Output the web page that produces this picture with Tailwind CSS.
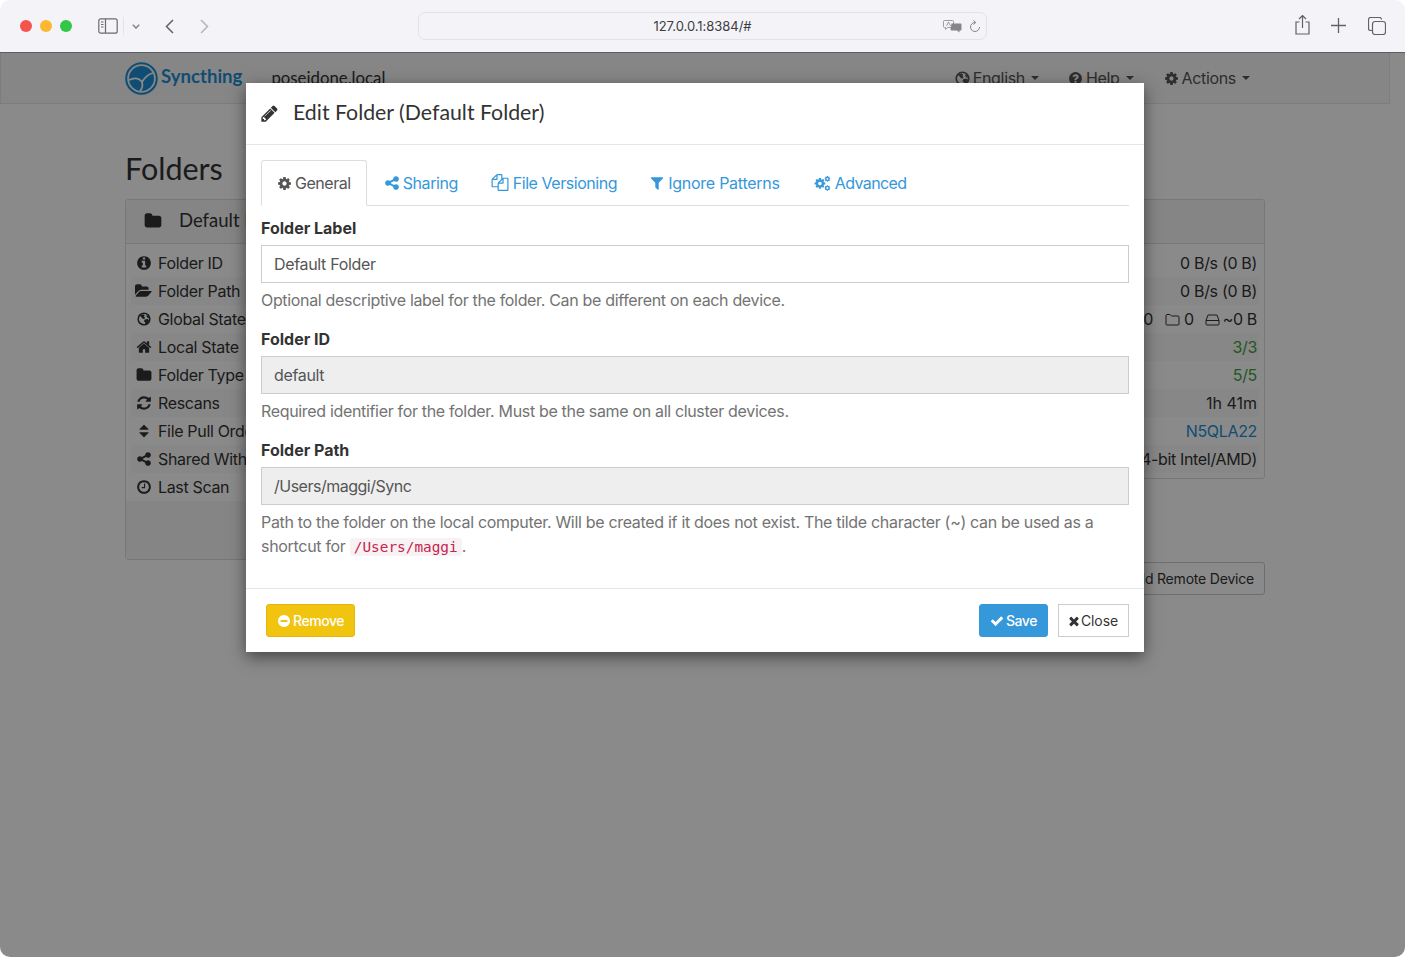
<!DOCTYPE html>
<html lang="en">
<head>
<meta charset="UTF-8">
<title>Syncthing</title>
<script src="https://cdn.jsdelivr.net/npm/@tailwindcss/browser@4"></script>
</head>
<body class="bg-white font-['Inter',sans-serif] text-[16px] tracking-[-0.33px] text-[#333]">
<!-- icon set -->
<svg class="hidden">
  <symbol id="cog" viewBox="0 0 1792 1792"><path fill="currentColor" d="M1152 896q0-106-75-181t-181-75-181 75-75 181 75 181 181 75 181-75 75-181zm512-109v222q0 12-8 23t-20 13l-185 28q-19 54-39 91 35 50 107 138 10 12 10 25t-9 23q-27 37-99 108t-94 71q-12 0-26-9l-138-108q-44 23-91 38-16 136-29 186-7 28-36 28h-222q-14 0-24.500-8.500t-11.500-21.500l-28-184q-49-16-90-37l-141 107q-10 9-25 9-14 0-25-11-126-114-165-168-7-10-7-23 0-12 8-23 15-21 51-66.500t54-70.500q-27-50-41-99l-183-27q-13-2-21-12.500t-8-23.500v-222q0-12 8-23t19-13l186-28q14-46 39-92-40-57-107-138-10-12-10-24 0-10 9-23 26-36 98.500-107.500t94.500-71.500q13 0 26 10l138 107q44-23 91-38 16-136 29-186 7-28 36-28h222q14 0 24.500 8.500t11.500 21.500l28 184q49 16 90 37l142-107q9-9 24-9 13 0 25 10 129 119 165 170 7 8 7 22 0 12-8 23-15 21-51 66.500t-54 70.500q26 50 41 98l183 28q13 2 21 12.500t8 23.500z"/></symbol>
  <symbol id="pencil" viewBox="0 0 1792 1792"><path fill="currentColor" d="M491 1536l91-91-235-235-91 91v107h128v128h107zm523-928q0-22-22-22-10 0-17 7l-542 542q-7 7-7 17 0 22 22 22 10 0 17-7l542-542q7-7 7-17zm-54-192l416 416-832 832h-416v-416zm683 96q0 53-37 90l-166 166-416-416 166-165q36-38 90-38 53 0 91 38l235 234q37 39 37 91z"/></symbol>
  <symbol id="share" viewBox="0 0 1792 1792"><path fill="currentColor" d="M1344 1024q133 0 226.500 93.500t93.500 226.500-93.500 226.500-226.500 93.500-226.500-93.500-93.500-226.500q0-12 2-34l-360-180q-92 86-218 86-133 0-226.500-93.500t-93.500-226.500 93.500-226.500 226.500-93.500q126 0 218 86l360-180q-2-22-2-34 0-133 93.500-226.500t226.500-93.500 226.500 93.500 93.500 226.500-93.500 226.500-226.500 93.500q-126 0-218-86l-360 180q2 22 2 34t-2 34l360 180q92-86 218-86z"/></symbol>
  <symbol id="files" viewBox="0 0 1792 1792"><path fill="currentColor" d="M1696 384q40 0 68 28t28 68v1216q0 40-28 68t-68 28h-960q-40 0-68-28t-28-68v-288h-544q-40 0-68-28t-28-68v-672q0-40 20-88t48-76l408-408q28-28 76-48t88-20h416q40 0 68 28t28 68v328q68-40 128-40h416zm-544 213l-299 299h299v-299zm-640-384l-299 299h299v-299zm196 647l316-316v-416h-384v416q0 40-28 68t-68 28h-416v640h512v-256q0-40 20-88t48-76zm956 804v-1152h-384v416q0 40-28 68t-68 28h-416v640h896z"/></symbol>
  <symbol id="filter" viewBox="0 0 1792 1792"><path fill="currentColor" d="M1595 295q17 41-14 70l-493 493v742q0 42-39 59-13 5-25 5-27 0-45-19l-256-256q-19-19-19-45v-486l-493-493q-31-29-14-70 17-39 59-39h1280q42 0 59 39z"/></symbol>
  <symbol id="folder" viewBox="0 0 1792 1792"><path fill="currentColor" d="M1728 608v704q0 92-66 158t-158 66h-1216q-92 0-158-66t-66-158v-960q0-92 66-158t158-66h320q92 0 158 66t66 158v32h672q92 0 158 66t66 158z"/></symbol>
  <symbol id="folder-open" viewBox="0 0 1920 1792"><path fill="currentColor" d="M1879 952q0 31-31 66l-336 396q-43 51-120.500 86.500t-143.500 35.500h-1088q-34 0-60.500-13t-26.500-43q0-31 31-66l336-396q43-51 120.500-86.500t143.500-35.500h1088q34 0 60.500 13t26.500 43zm-343-344v160h-832q-94 0-197 47.500t-164 119.500l-337 396-5 6q0-4-.5-12.500t-.5-12.500v-960q0-92 66-158t158-66h320q92 0 158 66t66 158v32h544q92 0 158 66t66 158z"/></symbol>
  <symbol id="info" viewBox="0 0 1792 1792"><path fill="currentColor" d="M1152 1376v-160q0-14-9-23t-23-9h-96v-512q0-14-9-23t-23-9h-320q-14 0-23 9t-9 23v160q0 14 9 23t23 9h96v320h-96q-14 0-23 9t-9 23v160q0 14 9 23t23 9h448q14 0 23-9t9-23zm-128-896v-160q0-14-9-23t-23-9h-192q-14 0-23 9t-9 23v160q0 14 9 23t23 9h192q14 0 23-9t9-23zm640 416q0 209-103 385.500t-279.500 279.500-385.500 103-385.500-103-279.500-279.500-103-385.500 103-385.500 279.500-279.500 385.500-103 385.500 103 279.500 279.500 103 385.500z"/></symbol>
  <symbol id="home" viewBox="0 0 1792 1792"><path fill="currentColor" d="M1472 992v480q0 26-19 45t-45 19h-384v-384h-256v384h-384q-26 0-45-19t-19-45v-480q0-1 .5-3t.5-3l575-474 575 474q1 2 1 6zm223-69l-62 74q-8 9-21 11h-3q-13 0-21-7l-692-577-692 577q-12 8-24 7-13-2-21-11l-62-74q-8-10-7-23.500t11-21.500l719-599q32-26 76-26t76 26l244 204v-195q0-14 9-23t23-9h192q14 0 23 9t9 23v408l219 182q10 8 11 21.500t-7 23.500z"/></symbol>
  <symbol id="refresh" viewBox="0 0 1792 1792"><path fill="currentColor" d="M1639 1056q0 5-1 7-64 268-268 434.500t-478 166.500q-146 0-282.500-55t-243.500-157l-129 129q-19 19-45 19t-45-19-19-45v-448q0-26 19-45t45-19h448q26 0 45 19t19 45-19 45l-137 137q71 66 161 102t187 36q134 0 250-65t186-179q11-17 53-117 8-23 30-23h192q13 0 22.500 9.500t9.500 22.500zm25-800v448q0 26-19 45t-45 19h-448q-26 0-45-19t-19-45 19-45l138-138q-148-137-349-137-134 0-250 65t-186 179q-11 17-53 117-8 23-30 23h-199q-13 0-22.500-9.500t-9.500-22.500v-7q65-268 270-434.500t480-166.500q146 0 284 55.500t245 156.500l130-129q19-19 45-19t45 19 19 45z"/></symbol>
  <symbol id="sort" viewBox="0 0 1792 1792"><path fill="currentColor" d="M1408 1088q0 26-19 45l-448 448q-19 19-45 19t-45-19l-448-448q-19-19-19-45t19-45 45-19h896q26 0 45 19t19 45zm0-384q0 26-19 45t-45 19h-896q-26 0-45-19t-19-45 19-45l448-448q19-19 45-19t45 19l448 448q19 19 19 45z"/></symbol>
  <symbol id="clock" viewBox="0 0 1792 1792"><path fill="currentColor" d="M1024 544v448q0 14-9 23t-23 9h-320q-14 0-23-9t-9-23v-64q0-14 9-23t23-9h224v-352q0-14 9-23t23-9h64q14 0 23 9t9 23zm416 352q0-148-73-273t-198-198-273-73-273 73-198 198-73 273 73 273 198 198 273 73 273-73 198-198 73-273zm224 0q0 209-103 385.500t-279.500 279.500-385.500 103-385.500-103-279.500-279.500-103-385.500 103-385.500 279.500-279.500 385.500-103 385.500 103 279.500 279.500 103 385.500z"/></symbol>
  <symbol id="question" viewBox="0 0 1792 1792"><path fill="currentColor" d="M1024 1376v-192q0-14-9-23t-23-9h-192q-14 0-23 9t-9 23v192q0 14 9 23t23 9h192q14 0 23-9t9-23zm256-672q0-88-55.500-163t-138.500-116-170-41q-243 0-371 213-15 24 8 42l132 100q7 6 19 6 16 0 25-12 53-68 86-92 34-24 86-24 48 0 85.500 26t37.500 59q0 38-20 61t-68 45q-63 28-115.500 86.500t-52.500 125.500v36q0 14 9 23t23 9h192q14 0 23-9t9-23q0-19 21.500-49.500t54.500-49.500q32-18 49-28.500t46-35 44.500-48 28-60.500 12.500-81zm384 192q0 209-103 385.500t-279.500 279.500-385.500 103-385.500-103-279.500-279.500-103-385.500 103-385.500 279.500-279.500 385.500-103 385.500 103 279.500 279.500 103 385.500z"/></symbol>
  <symbol id="minus" viewBox="0 0 1792 1792"><path fill="currentColor" d="M1344 960v-128q0-26-19-45t-45-19h-768q-26 0-45 19t-19 45v128q0 26 19 45t45 19h768q26 0 45-19t19-45zm320-64q0 209-103 385.500t-279.500 279.500-385.500 103-385.500-103-279.500-279.500-103-385.500 103-385.500 279.500-279.500 385.500-103 385.500 103 279.500 279.500 103 385.500z"/></symbol>
  <symbol id="check" viewBox="0 0 1792 1792"><path fill="currentColor" d="M1671 566q0 40-28 68l-724 724-136 136q-28 28-68 28t-68-28l-136-136-362-362q-28-28-28-68t28-68l136-136q28-28 68-28t68 28l294 295 656-657q28-28 68-28t68 28l136 136q28 28 28 68z"/></symbol>
  <symbol id="times" viewBox="0 0 1792 1792"><path fill="currentColor" d="M1490 1322q0 40-28 68l-136 136q-28 28-68 28t-68-28l-294-294-294 294q-28 28-68 28t-68-28l-136-136q-28-28-28-68t28-68l294-294-294-294q-28-28-28-68t28-68l136-136q28-28 68-28t68 28l294 294 294-294q28-28 68-28t68 28l136 136q28 28 28 68t-28 68l-294 294 294 294q28 28 28 68z"/></symbol>
  <symbol id="globe" viewBox="0 0 24 24"><circle cx="12" cy="12" r="10" fill="none" stroke="currentColor" stroke-width="2.600"/><path fill="currentColor" d="M5 6l5-2 3 1-1 3 2 2-2 2-3-1-2-3-2-1zM13 13l5-1 3 2-3 6-3 2-1-4-2-2zM17 5l3 3 1 3-3-1-2-3z"/></symbol>
  <symbol id="cogs" viewBox="0 0 24 24"><use href="#cog" x="2" y="5" width="15" height="15"/><use href="#cog" x="14.500" y="3" width="8" height="8"/><use href="#cog" x="14.500" y="14" width="8" height="8"/></symbol>
</svg>

<div class="relative h-[957px] overflow-hidden rounded-[10px] flex flex-col">
  <!-- browser toolbar -->
  <div class="h-[53px] shrink-0 bg-[#f3f3f8] border-b border-[#5e5e5e] flex items-center pl-[20px] pr-[19px] relative z-20">
    <div class="flex gap-[8px]">
      <span class="w-3 h-3 rounded-full bg-[#f4544c]"></span>
      <span class="w-3 h-3 rounded-full bg-[#fcb82e]"></span>
      <span class="w-3 h-3 rounded-full bg-[#33c748]"></span>
    </div>
    <svg class="ml-[26px] w-[20px] h-[16px] text-[#6b6b6f]" viewBox="0 0 20 16" fill="none" stroke="currentColor" stroke-width="1.200"><rect x=".8" y=".8" width="18.400" height="14.400" rx="2"/><path d="M7.500 1v14"/><path d="M3 4h2.500M3 6.500h2.500M3 9h2.500" stroke-width="1"/></svg>
    <span class="ml-[5px] w-px h-[18px] bg-[#e3e3e8]"></span>
    <svg class="ml-[8px] w-[8px] h-[5px] text-[#7c7c80]" viewBox="0 0 8 5" fill="none" stroke="currentColor" stroke-width="1.300"><path d="M.8.8L4 4l3.200-3.200"/></svg>
    <svg class="ml-[25px] w-[9px] h-[15px] text-[#626266]" viewBox="0 0 9 15" fill="none" stroke="currentColor" stroke-width="1.500"><path d="M8 1L1.500 7.500 8 14"/></svg>
    <svg class="ml-[26px] w-[9px] h-[15px] text-[#b6b6ba]" viewBox="0 0 9 15" fill="none" stroke="currentColor" stroke-width="1.500"><path d="M1 1l6.500 6.500L1 14"/></svg>
    <div class="ml-[209px] w-[569px] h-[28px] pt-[1px] rounded-[7px] border border-[#e2e2e7] bg-[#f3f3f8] relative flex items-center justify-center text-[13px] tracking-[-0.03px] text-[#3d3d3f]">
      127.0.0.1:8384/#
      <svg class="absolute right-[24px] top-[7px] w-[19px] h-[13px] text-[#85858a]" viewBox="0 0 19 13"><path d="M1.500.500h8a1 1 0 0 1 1 1v5a1 1 0 0 1-1 1h-5L2.500 9.500v-2h-1a1 1 0 0 1-1-1v-5a1 1 0 0 1 1-1z" fill="none" stroke="currentColor" stroke-width=".8"/><path d="M8.500 3.500h9a1 1 0 0 1 1 1v5a1 1 0 0 1-1 1h-1v2l-2.500-2h-5.500a1 1 0 0 1-1-1z" fill="currentColor"/><path d="M3.500 6l2-4 2 4" fill="none" stroke="currentColor" stroke-width=".8"/></svg>
      <svg class="absolute right-[5px] top-[7px] w-[12px] h-[13px] text-[#85858a]" viewBox="0 0 12 13" fill="none" stroke="currentColor" stroke-width="1"><path d="M6 2.500a4.500 4.500 0 1 0 4.500 4.500"/><path d="M4.500.500L6.800 2.500 4.500 4.500"/></svg>
    </div>
    <div class="ml-auto flex items-center text-[#626266]">
      <svg class="w-[15px] h-[20px] -mt-[2px]" viewBox="0 0 15 20" fill="none" stroke="currentColor" stroke-width="1.200"><path d="M4.500 7H1v12h13V7h-3.500"/><path d="M7.500 13V1M4 4l3.500-3.500L11 4"/></svg>
      <svg class="ml-[21px] w-[15px] h-[15px] -mt-[1px]" viewBox="0 0 15 15" fill="none" stroke="currentColor" stroke-width="1.300"><path d="M7.500 0v15M0 7.500h15"/></svg>
      <svg class="ml-[22px] w-[18px] h-[18px]" viewBox="0 0 18 18" fill="none" stroke="currentColor" stroke-width="1.200"><rect x="4.500" y="4.500" width="13" height="13" rx="2.500"/><path d="M13.500 2.500a2 2 0 0 0-2-2h-9a2 2 0 0 0-2 2v9a2 2 0 0 0 2 2h2"/></svg>
    </div>
  </div>

  <!-- Syncthing page -->
  <div class="relative flex-1">
    <nav class="w-[1390px] h-[51px] bg-[#f8f8f8] border border-t-0 border-[#e7e7e7]">
      <div class="w-[1140px] mx-auto h-full flex items-center">
        <svg class="w-[33px] h-[33px] shrink-0 text-[#1d8fd6]" viewBox="0 0 33 33">
          <circle cx="16.500" cy="16.500" r="15.300" fill="none" stroke="currentColor" stroke-width="2"/>
          <circle cx="16.500" cy="16.500" r="12.500" fill="currentColor"/>
          <path d="M4 18c6-3 10-2 13 2 3-5 7-8 11-9M17 20c1 4 0 7-2 9" fill="none" stroke="#fff" stroke-width="1.800"/>
        </svg>
        <span class="ml-[3px] -mt-[2px] font-['Lato',sans-serif] font-bold text-[18.600px] tracking-normal text-[#1d8fd6]">Syncthing</span>
        <span class="ml-[29px] font-['Lato',sans-serif] text-[16.800px] tracking-normal text-[#333]">poseidone.local</span>
        <div class="ml-auto mr-[15px] flex items-center text-[#555]">
          <svg class="w-[15px] h-[15px]"><use href="#globe"/></svg>
          <span class="ml-[3px]">English</span><span class="ml-[6px] border-x-4 border-t-4 border-x-transparent border-t-[#555]"></span>
          <svg class="ml-[29px] w-[15px] h-[15px]"><use href="#question"/></svg>
          <span class="ml-[3px]">Help</span><span class="ml-[6px] border-x-4 border-t-4 border-x-transparent border-t-[#555]"></span>
          <svg class="ml-[30px] w-[15px] h-[15px]"><use href="#cog"/></svg>
          <span class="ml-[3px]">Actions</span><span class="ml-[6px] border-x-4 border-t-4 border-x-transparent border-t-[#555]"></span>
        </div>
      </div>
    </nav>

    <main class="w-[1140px] ml-[125px]">
      <h1 class="mt-[46px] h-[49px] font-['Lato',sans-serif] text-[30.500px] leading-[36px] tracking-normal text-[#333]">Folders</h1>
      <div class="grid grid-cols-2 gap-[30px] items-start">
        <!-- left column -->
        <section class="h-[361px] border border-[#ddd] rounded-[3px] flex flex-col">
          <div class="h-[44px] pb-[2px] bg-[#f5f5f5] border-b border-[#ddd] flex items-center pl-[18px]">
            <svg class="w-[18px] h-[18px]"><use href="#folder"/></svg>
            <span class="ml-[17px] font-['Lato',sans-serif] text-[18.500px] tracking-normal">Default Folder</span>
          </div>
          <div class="p-[5px] pb-0">
            <div class="h-[28px] flex items-center pl-[5px]"><svg class="w-[16px] h-[16px]"><use href="#info"/></svg><span class="ml-[6px]">Folder ID</span></div>
            <div class="h-[28px] flex items-center pl-[4px] bg-[#f9f9f9]"><svg class="w-[17px] h-[16px]"><use href="#folder-open"/></svg><span class="ml-[6px]">Folder Path</span></div>
            <div class="h-[28px] flex items-center pl-[6px]"><svg class="w-[14px] h-[14px]"><use href="#globe"/></svg><span class="ml-[7px]">Global State</span></div>
            <div class="h-[28px] flex items-center pl-[5px] bg-[#f9f9f9]"><svg class="w-[16px] h-[16px]"><use href="#home"/></svg><span class="ml-[6px]">Local State</span></div>
            <div class="h-[28px] flex items-center pl-[5px]"><svg class="w-[16px] h-[16px]"><use href="#folder"/></svg><span class="ml-[6px]">Folder Type</span></div>
            <div class="h-[28px] flex items-center pl-[5px] bg-[#f9f9f9]"><svg class="w-[16px] h-[16px]"><use href="#refresh"/></svg><span class="ml-[6px]">Rescans</span></div>
            <div class="h-[28px] flex items-center pl-[5px]"><svg class="w-[16px] h-[16px]"><use href="#sort"/></svg><span class="ml-[6px]">File Pull Order</span></div>
            <div class="h-[28px] flex items-center pl-[5px] bg-[#f9f9f9]"><svg class="w-[16px] h-[16px]"><use href="#share"/></svg><span class="ml-[6px]">Shared With</span></div>
            <div class="h-[28px] flex items-center pl-[5px]"><svg class="w-[16px] h-[16px]"><use href="#clock"/></svg><span class="ml-[6px]">Last Scan</span></div>
          </div>
          <div class="flex-1 bg-[#f5f5f5]"></div>
        </section>
        <!-- right column -->
        <div>
          <section class="h-[280px] border border-[#ddd] rounded-[3px]">
            <div class="h-[44px] bg-[#f5f5f5] border-b border-[#ddd]"></div>
            <div class="p-[5px] pb-0 text-right [&>div]:h-[28px] [&>div]:flex [&>div]:items-center [&>div]:justify-end [&>div]:pr-[2px]">
              <div>0 B/s (0 B)</div>
              <div class="bg-[#f9f9f9]">0 B/s (0 B)</div>
              <div>
                <span>0</span>
                <svg class="ml-[12px] w-[15px] h-[13px]" viewBox="0 0 15 13" fill="none" stroke="currentColor"><path d="M1 2.500a1 1 0 0 1 1-1h3l1.500 1.500H13a1 1 0 0 1 1 1v7a1 1 0 0 1-1 1H2a1 1 0 0 1-1-1z"/></svg>
                <span class="ml-[4px]">0</span>
                <svg class="ml-[11px] w-[15px] h-[13px]" viewBox="0 0 15 13" fill="none" stroke="currentColor"><path d="M3 2h9l2 5.500v3.500a1 1 0 0 1-1 1H2a1 1 0 0 1-1-1V7.500zM1 7.500h13"/></svg>
                <span class="ml-[3px]">~0 B</span>
              </div>
              <div class="bg-[#f9f9f9] text-[#3fa142]">3/3</div>
              <div class="text-[#3fa142]">5/5</div>
              <div class="bg-[#f9f9f9] tracking-normal">1h 41m</div>
              <div class="text-[#1d8fd6]">N5QLA22</div>
              <div class="bg-[#f9f9f9]">macOS (64-bit Intel/AMD)</div>
            </div>
          </section>
          <div class="mt-[83px] flex justify-end">
            <span class="h-[33px] px-[10px] flex items-center border border-[#ccc] rounded-[3px] text-[14px] tracking-[-0.2px] text-[#333]">Add Remote Device</span>
          </div>
        </div>
      </div>
    </main>

    <!-- backdrop -->
    <div class="absolute inset-0 bg-black/46"></div>

    <!-- modal -->
    <div class="absolute left-[246px] top-[30px] w-[898px] h-[569px] bg-white shadow-[0_5px_15px_rgba(0,0,0,0.5)] flex flex-col">
      <header class="h-[62px] pb-[1px] shrink-0 border-b border-[#e5e5e5] flex items-center pl-[14px]">
        <svg class="w-[19px] h-[19px] text-[#333]"><use href="#pencil"/></svg>
        <h4 class="ml-[14px] font-['Lato',sans-serif] text-[21.300px] tracking-normal text-[#333]">Edit Folder (Default Folder)</h4>
      </header>
      <div class="flex-1 px-[15px] pt-[15px]">
        <ul class="h-[46px] flex border-b border-[#ddd] tracking-[-0.45px] text-[#3498db]">
          <li class="h-[46px] px-[15px] flex items-center border border-[#ddd] border-b-white bg-white rounded-t-[3px] text-[#555]"><svg class="w-[15px] h-[15px]"><use href="#cog"/></svg><span class="ml-[3px]">General</span></li>
          <li class="ml-[2px] px-[15px] flex items-center"><svg class="w-[16px] h-[16px]"><use href="#share"/></svg><span class="ml-[3px]">Sharing</span></li>
          <li class="ml-[2px] px-[15px] flex items-center"><svg class="w-[20px] h-[17px]"><use href="#files"/></svg><span class="ml-[3px]">File Versioning</span></li>
          <li class="ml-[2px] px-[15px] flex items-center"><svg class="w-[16px] h-[16px]"><use href="#filter"/></svg><span class="ml-[3px] tracking-[-0.25px]">Ignore Patterns</span></li>
          <li class="ml-[2px] px-[15px] flex items-center"><svg class="w-[20px] h-[20px]"><use href="#cogs"/></svg><span class="ml-[3px] tracking-[-0.6px]">Advanced</span></li>
        </ul>
        <label class="block mt-[10px] font-bold tracking-normal leading-[24px]">Folder Label</label>
        <div class="mt-[5px] h-[38px] px-[12px] flex items-center border border-[#ccc] bg-white text-[#555]">Default Folder</div>
        <p class="mt-[5px] leading-[24px] text-[#737373]">Optional descriptive label for the folder. Can be different on each device.</p>
        <label class="block mt-[15px] font-bold tracking-normal leading-[24px]">Folder ID</label>
        <div class="mt-[5px] h-[38px] px-[12px] flex items-center border border-[#ccc] bg-[#eee] text-[#555]">default</div>
        <p class="mt-[5px] leading-[24px] text-[#737373]">Required identifier for the folder. Must be the same on all cluster devices.</p>
        <label class="block mt-[15px] font-bold tracking-normal leading-[24px]">Folder Path</label>
        <div class="mt-[5px] h-[38px] px-[12px] flex items-center border border-[#ccc] bg-[#eee] tracking-[-0.5px] text-[#555]">/Users/maggi/Sync</div>
        <p class="mt-[5px] leading-[24px] tracking-[-0.31px] text-[#737373]">Path to the folder on the local computer. Will be created if it does not exist. The tilde character (~) can be used as a shortcut for <code class="px-[4px] py-[1px] bg-[#f9f2f4] rounded-[3px] font-['DejaVu_Sans_Mono',monospace] text-[14.400px] tracking-normal text-[#c7254e]">/Users/maggi</code>.</p>
      </div>
      <footer class="h-[64px] shrink-0 border-t border-[#e5e5e5] flex items-center px-[15px] text-[14px]">
        <span class="ml-[5px] h-[33px] px-[10px] flex items-center bg-[#f1c40f] border border-[#e4b80a] rounded-[3px] tracking-[-0.45px] text-white font-medium"><svg class="w-[14px] h-[14px]"><use href="#minus"/></svg><span class="ml-[2px]">Remove</span></span>
        <span class="ml-auto h-[33px] px-[10px] flex items-center bg-[#3498db] border border-[#3498db] rounded-[3px] tracking-[-0.45px] text-white font-medium"><svg class="w-[14px] h-[14px]"><use href="#check"/></svg><span class="ml-[2px]">Save</span></span>
        <span class="ml-[10px] h-[33px] pl-[8px] pr-[10px] flex items-center bg-white border border-[#ccc] tracking-[-0.1px] text-[#333]"><svg class="w-[14px] h-[14px]"><use href="#times"/></svg><span>Close</span></span>
      </footer>
    </div>
  </div>
</div>
</body>
</html>
